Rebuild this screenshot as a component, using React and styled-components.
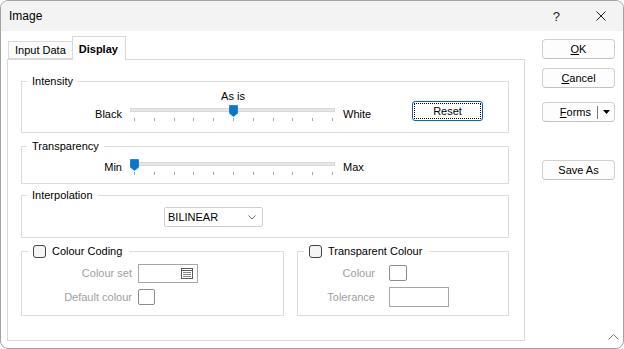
import React from "react";
import styled, { createGlobalStyle } from "styled-components";

const GlobalStyle = createGlobalStyle`
  html, body {
    margin: 0;
    padding: 0;
    background: #fff;
  }
  body {
    font-family: "Liberation Sans", Arial, sans-serif;
    font-size: 11px;
    color: #000;
  }
  * {
    box-sizing: border-box;
  }
`;

const Window = styled.div`
  position: relative;
  width: 624px;
  height: 349px;
  border: 1px solid #a3a3a3;
  border-radius: 8px;
  overflow: hidden;
  background: #fff;
  display: flex;
  flex-direction: column;
`;

const TitleBar = styled.div`
  height: 30px;
  flex: none;
  display: flex;
  align-items: center;
  background: #f3f3f3;
  padding: 0 17px 0 8px;
`;

const Title = styled.div`
  flex: 1;
  font-size: 12px;
  line-height: 30px;
`;

const HelpGlyph = styled.span`
  font-size: 13px;
  margin-right: 36px;
  color: #1b1b1b;
`;

const Body = styled.div`
  flex: 1;
  display: flex;
`;

const Main = styled.div`
  padding-left: 6px;
  display: flex;
  flex-direction: column;
`;

const TabStrip = styled.div`
  height: 28px;
  display: flex;
  align-items: flex-end;
  padding-left: 1px;
`;

const Tab = styled.div`
  position: relative;
  z-index: ${(p) => (p.$active ? 1 : 0)};
  height: ${(p) => (p.$active ? "24px" : "18px")};
  margin-bottom: ${(p) => (p.$active ? "-1px" : "0")};
  padding: 0 ${(p) => (p.$active ? "7px 0 6px" : "6px")};
  display: flex;
  align-items: center;
  border: 1px solid #d9d9d9;
  border-bottom: ${(p) => (p.$active ? "none" : "1px solid #d9d9d9")};
  background: ${(p) => (p.$active ? "#fff" : "#fafafa")};
  font-weight: ${(p) => (p.$active ? "bold" : "normal")};
  & + & {
    margin-left: -1px;
  }
`;

const Panel = styled.div`
  width: 518px;
  height: 282px;
  border: 1px solid #d9d9d9;
  padding: 13px 0 0 13px;
  display: flex;
  flex-direction: column;
`;

const Group = styled.fieldset`
  width: ${(p) => p.$w || 488}px;
  margin: ${(p) => p.$top || 0}px 0 0 0;
  padding: 0;
  min-width: 0;
  border: 1px solid #dcdcdc;
`;

const Legend = styled.legend`
  margin-left: ${(p) => (p.$check ? 6 : 5)}px;
  padding: 0 ${(p) => (p.$check ? 7 : 5)}px 0 5px;
  line-height: 16px;
  height: 16px;
`;

const LegendRow = styled.span`
  display: inline-flex;
  align-items: center;
  gap: 6px;
`;

const Checkbox = styled.span`
  width: 13px;
  height: 13px;
  border: 1px solid #444;
  border-radius: 3px;
  background: #f5f5f5;
`;

const Content = styled.div`
  height: ${(p) => p.$h}px;
  display: flex;
  align-items: flex-start;
`;

const SideLabel = styled.div`
  width: ${(p) => p.$w}px;
  margin: ${(p) => p.$top}px 0 0 ${(p) => p.$left || 0}px;
  line-height: 16px;
  text-align: ${(p) => (p.$right ? "right" : "left")};
`;

const SliderCol = styled.div`
  width: 210px;
  margin-left: 6px;
  padding-top: ${(p) => p.$top || 0}px;
  display: flex;
  flex-direction: column;
`;

const Caption = styled.div`
  line-height: 14px;
  height: 16px;
  text-align: center;
`;

const SliderBox = styled.div`
  position: relative;
  height: 17px;
`;

const Track = styled.div`
  margin: 3px 3px 0 2px;
  height: 4px;
  background: #e6e6e6;
  border: 1px solid #d8d8d8;
`;

const Ticks = styled.div`
  margin: 6px 5px 0 6px;
  height: 3px;
  display: flex;
  justify-content: space-between;
`;

const Tick = styled.span`
  width: 1px;
  height: 3px;
  background: #a8a8a8;
`;

const Thumb = styled.svg`
  position: absolute;
  top: 0;
  width: 9px;
  height: 12px;
`;

const ResetButton = styled.button`
  position: relative;
  width: 71px;
  height: 20px;
  margin: 12px 0 0 0;
  padding: 0;
  border: 1px solid #0067c0;
  border-radius: 3px;
  background: #fdfdfd;
  font: inherit;
  color: #000;
  &::after {
    content: "";
    position: absolute;
    inset: 1px;
    border: 1px dotted #000;
  }
`;

const Select = styled.div`
  margin: 4px 0 0 142px;
  width: 99px;
  height: 20px;
  border: 1px solid #cfcfcf;
  border-radius: 2px;
  display: flex;
  align-items: center;
  justify-content: space-between;
  padding: 0 6px 0 3px;
`;

const GroupRow = styled.div`
  margin-top: 5px;
  display: flex;
  gap: 13px;
`;

const FormRows = styled.div`
  height: 56px;
  padding-top: 4px;
  display: flex;
  flex-direction: column;
  gap: 4px;
`;

const FormRow = styled.div`
  height: 20px;
  display: flex;
  align-items: center;
`;

const DimLabel = styled.div`
  width: ${(p) => p.$w}px;
  margin-right: ${(p) => p.$gap}px;
  text-align: right;
  color: #a0a0a0;
`;

const Field = styled.div`
  width: 60px;
  height: ${(p) => p.$h || 20}px;
  border: 1px solid #a6a6a6;
  display: flex;
  align-items: center;
  justify-content: flex-end;
  padding-right: 4px;
`;

const Swatch = styled.div`
  width: ${(p) => p.$w || 17}px;
  height: 16px;
  border: 1px solid #8c8c8c;
  border-radius: 2px;
  background: #fff;
`;

const ButtonColumn = styled.div`
  margin-left: 17px;
  padding-top: 8px;
  display: flex;
  flex-direction: column;
`;

const DlgButton = styled.button`
  width: 73px;
  height: 20px;
  margin-top: ${(p) => p.$top || 0}px;
  padding: 0;
  border: 1px solid #d0d0d0;
  border-bottom-color: #c2c2c2;
  border-radius: 4px;
  background: #fdfdfd;
  font: inherit;
  color: #000;
  display: flex;
  align-items: center;
  justify-content: center;
`;

const FormsLabel = styled.span`
  flex: 1;
  text-align: right;
  padding-right: 6px;
`;

const Divider = styled.span`
  width: 1px;
  height: 13px;
  background: #7a7a7a;
`;

const Caret = styled.span`
  width: 16px;
  display: flex;
  justify-content: center;
`;

const Grip = styled.svg`
  position: absolute;
  right: 4px;
  bottom: 8px;
  width: 11px;
  height: 6px;
`;

function Slider({ value }) {
  return (
    <SliderBox>
      <Track />
      <Ticks>
        {Array.from({ length: 11 }).map((_, i) => (
          <Tick key={i} />
        ))}
      </Ticks>
      <Thumb viewBox="0 0 9 12" style={{ left: 2 + value * 198 }}>
        <path d="M0.5 0.5 H8.5 V8.3 L4.5 11.5 L0.5 8.3 Z" fill="#0078d4" stroke="#005fb8" strokeWidth="0.6" />
      </Thumb>
    </SliderBox>
  );
}

function ListIcon() {
  return (
    <svg width="12" height="11" viewBox="0 0 12 11">
      <rect x="0.5" y="0.5" width="11" height="10" fill="none" stroke="#5a5a5a" />
      <path d="M0.5 2.5 H11.5" stroke="#5a5a5a" />
      <path d="M2 4.5 H10 M2 6.5 H10 M2 8.5 H10" stroke="#8a8a8a" />
    </svg>
  );
}

function App() {
  return (
    <>
      <GlobalStyle />
      <Window>
        <TitleBar>
          <Title>Image</Title>
          <HelpGlyph>?</HelpGlyph>
          <svg width="10" height="10" viewBox="0 0 10 10">
            <path d="M0.5 0.5 L9.5 9.5 M9.5 0.5 L0.5 9.5" stroke="#1b1b1b" strokeWidth="1" />
          </svg>
        </TitleBar>
        <Body>
          <Main>
            <TabStrip>
              <Tab>Input Data</Tab>
              <Tab $active>Display</Tab>
            </TabStrip>
            <Panel>
              <Group>
                <Legend>Intensity</Legend>
                <Content $h={43}>
                  <SideLabel $w={100} $top={17} $right>
                    Black
                  </SideLabel>
                  <SliderCol>
                    <Caption>As is</Caption>
                    <Slider value={0.5} />
                  </SliderCol>
                  <SideLabel $w={69} $top={17} $left={5}>
                    White
                  </SideLabel>
                  <ResetButton>Reset</ResetButton>
                </Content>
              </Group>

              <Group $top={5}>
                <Legend>Transparency</Legend>
                <Content $h={29}>
                  <SideLabel $w={100} $top={5} $right>
                    Min
                  </SideLabel>
                  <SliderCol $top={5}>
                    <Slider value={0} />
                  </SliderCol>
                  <SideLabel $w={69} $top={5} $left={5}>
                    Max
                  </SideLabel>
                </Content>
              </Group>

              <Group $top={3}>
                <Legend>Interpolation</Legend>
                <Content $h={34}>
                  <Select>
                    <span>BILINEAR</span>
                    <svg width="8" height="5" viewBox="0 0 8 5">
                      <path d="M0.5 0.5 L4 4 L7.5 0.5" fill="none" stroke="#6a6a6a" />
                    </svg>
                  </Select>
                </Content>
              </Group>

              <GroupRow>
                <Group $w={263}>
                  <Legend $check>
                    <LegendRow>
                      <Checkbox />
                      Colour Coding
                    </LegendRow>
                  </Legend>
                  <FormRows>
                    <FormRow>
                      <DimLabel $w={110} $gap={6}>Colour set</DimLabel>
                      <Field $h={19}>
                        <ListIcon />
                      </Field>
                    </FormRow>
                    <FormRow>
                      <DimLabel $w={110} $gap={6}>Default colour</DimLabel>
                      <Swatch />
                    </FormRow>
                  </FormRows>
                </Group>
                <Group $w={212}>
                  <Legend $check>
                    <LegendRow>
                      <Checkbox />
                      Transparent Colour
                    </LegendRow>
                  </Legend>
                  <FormRows>
                    <FormRow>
                      <DimLabel $w={77} $gap={14}>Colour</DimLabel>
                      <Swatch $w={18} />
                    </FormRow>
                    <FormRow>
                      <DimLabel $w={77} $gap={14}>Tolerance</DimLabel>
                      <Field />
                    </FormRow>
                  </FormRows>
                </Group>
              </GroupRow>
            </Panel>
          </Main>

          <ButtonColumn>
            <DlgButton>
              <span>
                <u>O</u>K
              </span>
            </DlgButton>
            <DlgButton $top={9}>
              <span>
                <u>C</u>ancel
              </span>
            </DlgButton>
            <DlgButton $top={14}>
              <FormsLabel>
                <u>F</u>orms
              </FormsLabel>
              <Divider />
              <Caret>
                <svg width="7" height="4" viewBox="0 0 7 4">
                  <path d="M0 0 H7 L3.5 4 Z" fill="#000" />
                </svg>
              </Caret>
            </DlgButton>
            <DlgButton $top={38}>Save As</DlgButton>
          </ButtonColumn>
        </Body>
        <Grip viewBox="0 0 11 6">
          <path d="M0.5 5.5 L5.5 0.5 L10.5 5.5" fill="none" stroke="#777" />
        </Grip>
      </Window>
    </>
  );
}

export default App;
